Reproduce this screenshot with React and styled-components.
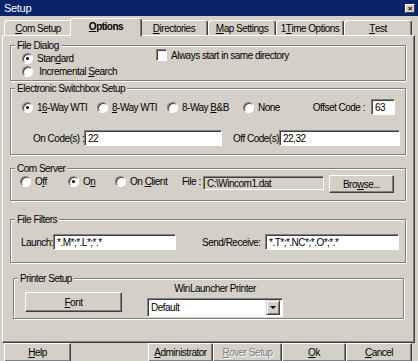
import React from 'react';
import styled, { createGlobalStyle, css } from 'styled-components';

const GlobalStyle = createGlobalStyle`
  html, body {
    margin: 0;
    padding: 0;
    background: #d4d0c8;
  }
  body {
    font-family: "Liberation Sans", Arial, sans-serif;
    font-size: 10px;
    letter-spacing: -0.5px;
    color: #000;
  }
`;

const Window = styled.div`
  width: 418px;
  height: 361px;
  overflow: hidden;
  background: #d4d0c8;
  display: flex;
  flex-direction: column;
`;

const TitleBar = styled.div`
  height: 16px;
  flex: none;
  background: #0a246a;
  color: #fff;
  font-size: 11px;
  letter-spacing: -0.3px;
  display: flex;
  align-items: center;
  justify-content: space-between;
  padding: 0 3px 0 4px;
`;

const CloseBtn = styled.div`
  width: 10px;
  height: 9px;
  box-sizing: border-box;
  background: #d4d0c8;
  border: 1px solid;
  border-color: #fff #404040 #404040 #fff;
  color: #000;
  font-size: 8px;
  font-weight: bold;
  line-height: 7px;
  text-align: center;
  letter-spacing: 0;
`;

const TabStrip = styled.div`
  margin-top: 2px;
  height: 17px;
  flex: none;
  display: grid;
  grid-template-columns: repeat(6, 68px);
  align-items: end;
  padding-left: 4px;
`;

const Tab = styled.div`
  height: 15px;
  box-sizing: border-box;
  border: 1px solid;
  border-bottom: none;
  border-color: #fff #404040 transparent #fff;
  box-shadow: inset -1px 0 0 #808080;
  border-radius: 3px 3px 0 0;
  background: #d4d0c8;
  display: flex;
  align-items: center;
  justify-content: center;
  ${p => p.$active && css`
    height: 18px;
    margin: 0 -2px -1px;
    font-weight: bold;
    position: relative;
    z-index: 1;
    padding-bottom: 2px;
  `}
`;

const Panel = styled.div`
  margin-left: 2px;
  width: 413px;
  height: 308px;
  flex: none;
  box-sizing: border-box;
  border: 1px solid;
  border-color: #fff #404040 #404040 #fff;
  box-shadow: inset -1px -1px 0 #808080;
  padding: 0 8px 0 7px;
  display: flex;
  flex-direction: column;
`;

const Group = styled.div`
  position: relative;
  box-sizing: border-box;
  height: ${p => p.$h}px;
  margin-top: ${p => p.$mt}px;
  margin-left: ${p => p.$mx || 0}px;
  margin-right: ${p => p.$mx ? p.$mx - 1 : 0}px;
  border: 1px solid #808080;
  box-shadow: 1px 1px 0 #fff, inset 1px 1px 0 #fff;
  padding: ${p => p.$pad};
`;

const Legend = styled.span`
  position: absolute;
  top: -7px;
  left: 4px;
  padding: 0 2px;
  line-height: 13px;
  background: #d4d0c8;
`;

const Row = styled.div`
  display: flex;
  align-items: ${p => p.$align || 'center'};
  margin-top: ${p => p.$mt || 0}px;
  padding-left: ${p => p.$pl || 0}px;
`;

const Column = styled.div`
  display: flex;
  flex-direction: column;
  width: ${p => p.$w}px;
  flex: none;
`;

const RadioItem = styled.label`
  display: flex;
  align-items: center;
  height: 13px;
  width: ${p => (p.$w ? `${p.$w}px` : 'auto')};
  flex: none;
  gap: 4px;
  white-space: nowrap;
`;

const RadioDot = styled.span`
  width: 11px;
  height: 11px;
  flex: none;
  box-sizing: border-box;
  border-radius: 50%;
  background: #fff;
  border: 1px solid;
  border-color: #808080 #fff #fff #808080;
  box-shadow: inset 1px 1px 0 #404040;
  position: relative;
  ${p => p.$checked && css`
    &::after {
      content: '';
      position: absolute;
      left: 3px;
      top: 3px;
      width: 3px;
      height: 3px;
      border-radius: 50%;
      background: #000;
    }
  `}
`;

const CheckItem = styled.label`
  display: flex;
  align-items: center;
  gap: 4px;
  margin-top: -3px;
  height: 12px;
  white-space: nowrap;
`;

const CheckBox = styled.span`
  width: 11px;
  height: 12px;
  flex: none;
  box-sizing: border-box;
  background: #fff;
  border: 1px solid;
  border-color: #808080 #fff #fff #808080;
  box-shadow: inset 1px 1px 0 #404040;
`;

const Label = styled.span`
  width: ${p => (p.$w ? `${p.$w}px` : 'auto')};
  margin-left: ${p => p.$ml || 0}px;
  margin-right: ${p => p.$mr || 0}px;
  flex: none;
  white-space: nowrap;
  line-height: 13px;
  ${p => p.$push && css`margin-left: auto;`}
`;

const Field = styled.div`
  width: ${p => p.$w}px;
  height: ${p => p.$h || 16}px;
  margin-top: ${p => p.$mt || 0}px;
  flex: none;
  box-sizing: border-box;
  background: ${p => (p.$disabled ? '#d4d0c8' : '#fff')};
  border: 1px solid;
  border-color: #808080 #fff #fff #808080;
  box-shadow: inset 1px 1px 0 #404040;
  padding-left: 3px;
  display: flex;
  align-items: center;
  white-space: nowrap;
  overflow: hidden;
`;

const Button = styled.div`
  width: ${p => p.$w}px;
  height: ${p => p.$h || 19}px;
  margin-left: ${p => p.$ml || 0}px;
  flex: none;
  box-sizing: border-box;
  background: #d4d0c8;
  border: 1px solid;
  border-color: #fff #404040 #404040 #fff;
  box-shadow: inset -1px -1px 0 #808080;
  display: flex;
  align-items: center;
  justify-content: center;
  white-space: nowrap;
  ${p => p.$disabled && css`
    color: #808080;
    text-shadow: 1px 1px 0 #fff;
  `}
`;

const PrinterBox = styled.div`
  display: flex;
  flex-direction: column;
  align-items: center;
  margin: -10px 0 0 25px;
`;

const PrinterLabel = styled.div`
  line-height: 13px;
`;

const Select = styled(Field)`
  height: 19px;
  margin-top: 3px;
  padding-right: 2px;
  justify-content: space-between;
`;

const DropBtn = styled.div`
  width: 14px;
  height: 15px;
  box-sizing: border-box;
  background: #d4d0c8;
  border: 1px solid;
  border-color: #d4d0c8 #404040 #404040 #d4d0c8;
  box-shadow: inset 1px 1px 0 #fff, inset -1px -1px 0 #808080;
  display: flex;
  align-items: center;
  justify-content: center;
  &::after {
    content: '';
    border-left: 3px solid transparent;
    border-right: 3px solid transparent;
    border-top: 3px solid #000;
  }
`;

const BottomBar = styled.div`
  display: flex;
  padding: 0 6px 0 4px;
  flex: none;
`;

const U = styled.span`
  text-decoration: underline;
`;

const tabs = [
  { key: 'com', label: <><U>C</U>om Setup</> },
  { key: 'opt', label: <><U>O</U>ptions</>, active: true },
  { key: 'dir', label: <><U>D</U>irectories</> },
  { key: 'map', label: <><U>M</U>ap Settings</> },
  { key: 'one', label: <>1<U>T</U>ime Options</> },
  { key: 'test', label: <><U>T</U>est</> },
];

const Radio = ({ checked, w, children }) => (
  <RadioItem $w={w}>
    <RadioDot $checked={checked} />
    <span>{children}</span>
  </RadioItem>
);

const App = () => {
  return (
    <Window>
      <GlobalStyle />
      <TitleBar>
        <span>Setup</span>
        <CloseBtn>×</CloseBtn>
      </TitleBar>

      <TabStrip>
        {tabs.map(t => (
          <Tab key={t.key} $active={t.active}>{t.label}</Tab>
        ))}
      </TabStrip>

      <Panel>
        <Group $mt={9} $h={36} $pad="6px 0 0 11px">
          <Legend>File Dialog</Legend>
          <Row $align="flex-start">
            <Column $w={134}>
              <Radio checked>Stan<U>d</U>ard</Radio>
              <Radio>{'\u00a0'}Incremental <U>S</U>earch</Radio>
            </Column>
            <CheckItem>
              <CheckBox />
              <span>Always start in same directory</span>
            </CheckItem>
          </Row>
        </Group>

        <Group $mt={7} $h={67} $pad="10px 10px 0 11px">
          <Legend>Electronic Switchbox Setup</Legend>
          <Row>
            <Radio checked w={75}>1<U>6</U>-Way WTI</Radio>
            <Radio w={70}><U>8</U>-Way WTI</Radio>
            <Radio w={76}>8-Way <U>B</U>&amp;B</Radio>
            <Radio>None</Radio>
            <Label $push $mr={6}>Offset Code :</Label>
            <Field $w={24}>63</Field>
          </Row>
          <Row $mt={15} $pl={11}>
            <Label $w={51}>On Code(s) :</Label>
            <Field $w={138}>22</Field>
            <Label $w={46} $ml={11}>Off Code(s):</Label>
            <Field $w={121}>22,32</Field>
          </Row>
        </Group>

        <Group $mt={13} $h={33} $pad="6px 0 0 9px">
          <Legend>Com Server</Legend>
          <Row $align="flex-start">
            <Radio w={48}>O<U>f</U>f</Radio>
            <Radio checked w={47}>O<U>n</U></Radio>
            <Radio w={67}>On <U>C</U>lient</Radio>
            <Label $w={21}>File :</Label>
            <Field $w={121} $h={14} $mt={1} $disabled>C:\Wincom1.dat</Field>
            <Button $w={65} $h={18} $ml={5}>Bro<U>w</U>se...</Button>
          </Row>
        </Group>

        <Group $mt={18} $h={44} $pad="14px 0 0 10px">
          <Legend>File Filters</Legend>
          <Row>
            <Label $w={32}>Launch:</Label>
            <Field $w={123}>*.M*;*.L*;*.*</Field>
            <Label $w={63} $ml={26}>Send/Receive:</Label>
            <Field $w={134}>*.T*;*.NC*;*.O*;*.*</Field>
          </Row>
        </Group>

        <Group $mt={15} $h={41} $mx={3} $pad="13px 0 0 11px">
          <Legend>Printer Setup</Legend>
          <Row $align="flex-start">
            <Button $w={97} $h={20}><U>F</U>ont</Button>
            <PrinterBox>
              <PrinterLabel>WinLauncher Printer</PrinterLabel>
              <Select $w={136}>
                <span>Default</span>
                <DropBtn />
              </Select>
            </PrinterBox>
          </Row>
        </Group>
      </Panel>

      <BottomBar>
        <Button $w={67}><U>H</U>elp</Button>
        <Button $w={65} $ml={77}><U>A</U>dministrator</Button>
        <Button $w={69} $disabled><U>R</U>over Setup</Button>
        <Button $w={64}><U>O</U>k</Button>
        <Button $w={66}><U>C</U>ancel</Button>
      </BottomBar>
    </Window>
  );
};

export default App;
